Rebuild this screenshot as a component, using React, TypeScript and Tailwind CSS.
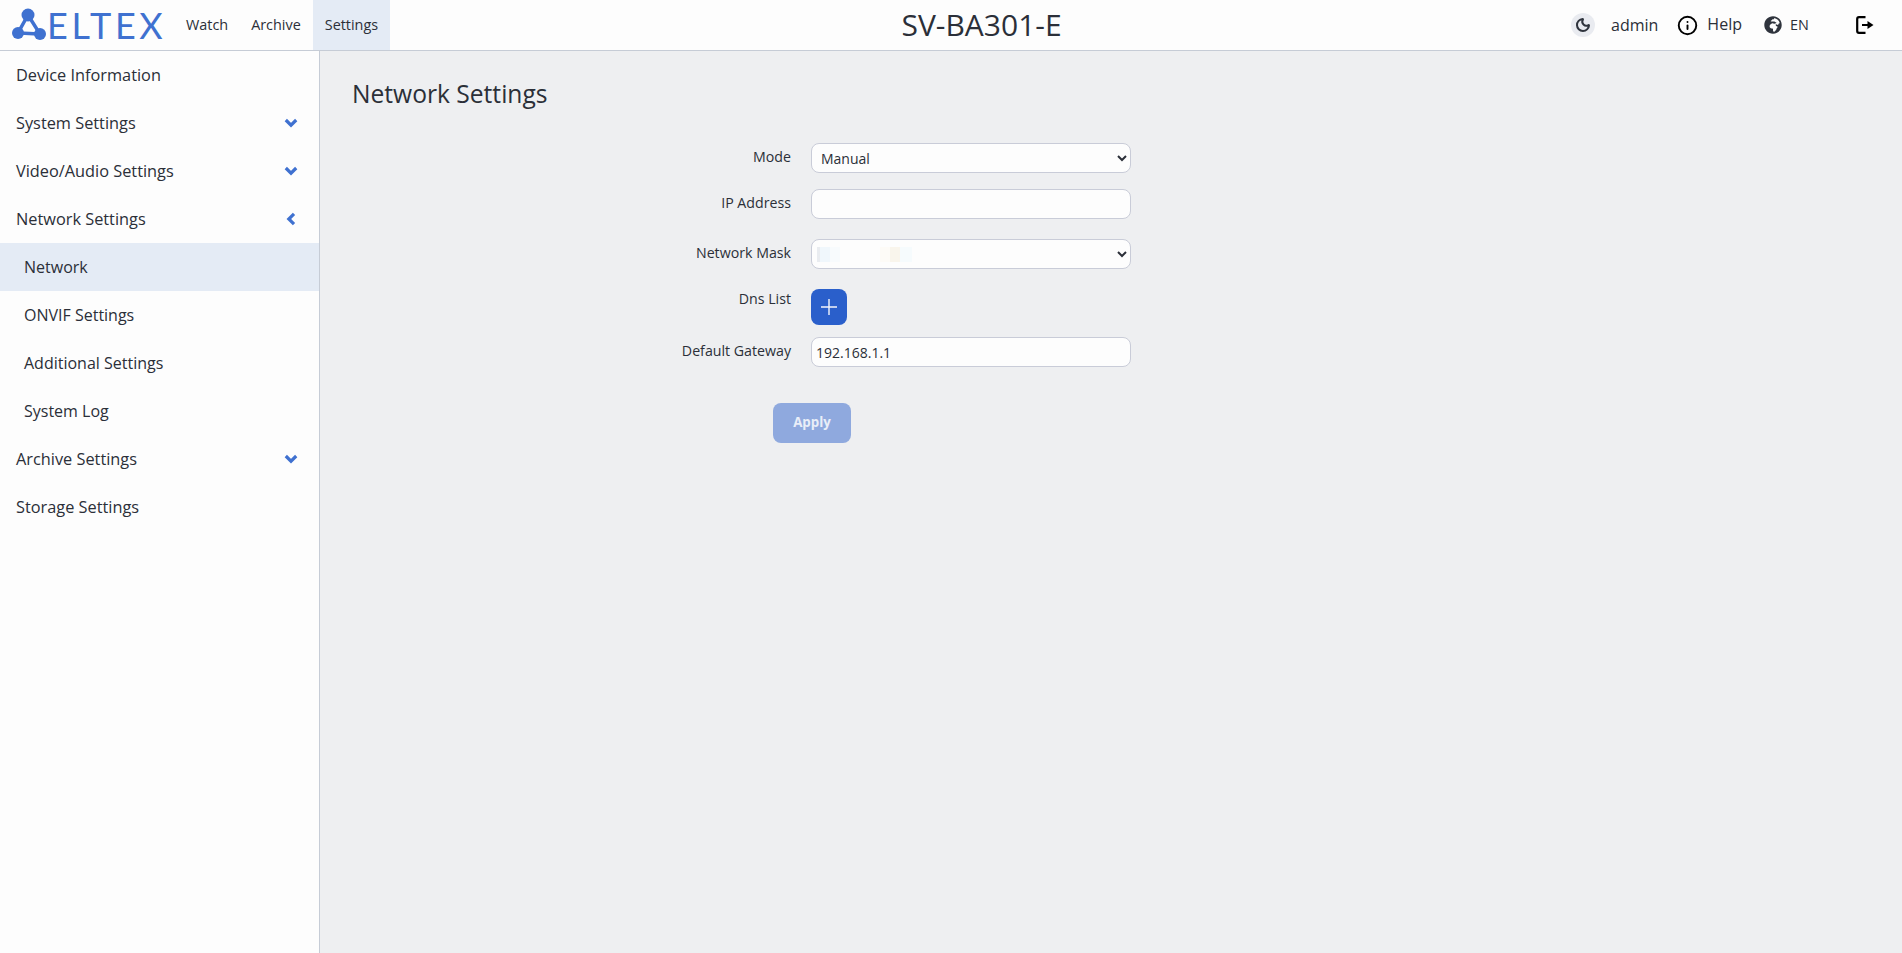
import { FaGlobeAfrica } from 'react-icons/fa';
import { Info, Moon } from 'lucide-react';

const FONT = "font-['Open_Sans',sans-serif]";

type NavItem = { label: string; icon?: 'down' | 'left'; sub?: boolean; active?: boolean };

const nav: NavItem[] = [
  { label: 'Device Information' },
  { label: 'System Settings', icon: 'down' },
  { label: 'Video/Audio Settings', icon: 'down' },
  { label: 'Network Settings', icon: 'left' },
  { label: 'Network', sub: true, active: true },
  { label: 'ONVIF Settings', sub: true },
  { label: 'Additional Settings', sub: true },
  { label: 'System Log', sub: true },
  { label: 'Archive Settings', icon: 'down' },
  { label: 'Storage Settings' },
];

function Logo() {
  return (
    <div className="flex items-center pl-[12px] w-[176px]">
      <svg width="36" height="34" viewBox="0 0 36 34" className="shrink-0">
        <path d="M16 7 L6 25 L28 26 Z" stroke="#3f71d0" strokeWidth="3.5" fill="none" />
        <g fill="#3f71d0">
          <circle cx="16" cy="7" r="6.5" />
          <circle cx="6" cy="25" r="6" />
          <circle cx="28" cy="26" r="6" />
        </g>
      </svg>
      <span className="ml-[-1px] text-[36px] leading-none font-['Lato',sans-serif] font-normal tracking-[3.6px] text-[#3f71d0]">
        ELTEX
      </span>
    </div>
  );
}

function Header() {
  return (
    <header className="relative h-[51px] shrink-0 flex items-stretch bg-[#fdfdfd] border-b border-[#c6ccd6] text-[#2b2f38]">
      <Logo />
      <nav className="flex items-stretch text-[14.4px]">
        <a className="flex items-center px-[10px]">Watch</a>
        <a className="flex items-center px-[12px] ml-[1px]">Archive</a>
        <a className="flex items-center px-[12px] bg-[#e4ebf5]">Settings</a>
      </nav>
      <div className="flex-1 flex items-center justify-center">
        <span className="text-[30px] leading-none ml-[33px]">SV-BA301-E</span>
      </div>
      <div className="flex items-center w-[362px] text-[16px]">
        <span className="flex items-center justify-center w-[24px] h-[24px] rounded-full bg-[#e9ebf0] ml-[31px]">
          <Moon size={16} color="#2f343d" strokeWidth={3} />
        </span>
        <span className="ml-[16px]">admin</span>
        <Info size={21} color="#000" strokeWidth={2.2} className="ml-[19px]" />
        <span className="ml-[9px] mt-[-3px]">Help</span>
        <FaGlobeAfrica size={18} color="#2f343d" className="ml-[22px]" />
        <span className="ml-[8px] text-[14.4px]">EN</span>
        <svg width="18" height="18" viewBox="0 0 18 18" fill="none" className="ml-[47px]">
          <path d="M9.5 1.2 H3 Q1.2 1.2 1.2 3 V15 Q1.2 16.8 3 16.8 H9.5" stroke="#000" strokeWidth="2.2" />
          <path d="M6 8 H11.5 V5 L17.5 9 L11.5 13 V10 H6 Z" fill="#000" />
        </svg>
      </div>
    </header>
  );
}

function ChevronDown() {
  return (
    <svg width="14" height="10" viewBox="0 0 14 10" fill="none">
      <path d="M1.8 2 L7 7.2 L12.2 2" stroke="#3f71d0" strokeWidth="3.2" />
    </svg>
  );
}

function ChevronLeft() {
  return (
    <svg width="10" height="14" viewBox="0 0 10 14" fill="none" className="mr-[2px]">
      <path d="M8 1.8 L2.8 7 L8 12.2" stroke="#3f71d0" strokeWidth="3.2" />
    </svg>
  );
}

function Sidebar() {
  return (
    <aside className="w-[320px] shrink-0 bg-[#fdfdfd] border-r border-[#c6ccd6] text-[#2b2f38]">
      {nav.map(item => (
        <div
          key={item.label}
          className={`h-[48px] flex items-center justify-between pr-[21px] ${item.sub ? 'pl-[24px] text-[16px]' : 'pl-[16px] text-[16.32px]'} ${item.active ? 'bg-[#e4ebf5]' : ''}`}
        >
          <span>{item.label}</span>
          {item.icon === 'down' && <ChevronDown />}
          {item.icon === 'left' && <ChevronLeft />}
        </div>
      ))}
    </aside>
  );
}

function Field({ label, className, labelClass, children }: { label: string; className?: string; labelClass?: string; children: React.ReactNode }) {
  return (
    <div className={`flex items-start ${className ?? ''}`}>
      <label className={`w-[459px] pr-[20px] text-right text-[14.2px] leading-[27px] text-[#2b2f38] ${labelClass ?? ''}`}>{label}</label>
      {children}
    </div>
  );
}

const inputCls =
  'w-[320px] h-[30px] rounded-[8px] border border-[#c9ccd8] bg-[#fdfdfd] text-[14px] text-[#2b2f38] outline-none';

export default function App() {
  return (
    <div className={`${FONT} h-[953px] flex flex-col bg-[#eeeff1] overflow-hidden`}>
      <Header />
      <div className="flex-1 flex min-h-0">
        <Sidebar />
        <main className="flex-1 pl-[32px] pt-[27px]">
          <h1 className="text-[24.6px] leading-[32px] text-[#2b2f38]">Network Settings</h1>
          <form className="mt-[33px]">
            <Field label="Mode">
              <select className={`${inputCls} pl-[5px]`} defaultValue="Manual">
                <option>Manual</option>
              </select>
            </Field>
            <Field label="IP Address" className="mt-[16px]">
              <input className={`${inputCls} px-[4px]`} />
            </Field>
            <Field label="Network Mask" className="mt-[20px]">
              <div className="relative">
                <select className={`${inputCls} pl-[5px]`}>
                  <option></option>
                </select>
                <div className="absolute left-[6px] top-[8px] h-[15px] flex pointer-events-none">
                  <span className="w-[3px] bg-[#e9ecf0]" />
                  <span className="w-[10px] bg-[#f0f7fc]" />
                  <span className="w-[10px] bg-[#f8fbfd]" />
                  <span className="w-[40px]" />
                  <span className="w-[10px] bg-[#fdfbf7]" />
                  <span className="w-[10px] bg-[#f9f5ec]" />
                  <span className="w-[12px] bg-[#f6fbfd]" />
                </div>
              </div>
            </Field>
            <Field label="Dns List" className="mt-[20px]" labelClass="mt-[-4px]">
              <button type="button" className="w-[36px] h-[36px] rounded-[8px] bg-[#2a5fcb] flex items-center justify-center">
                <svg width="16" height="16" viewBox="0 0 16 16" stroke="#f3f5fb" strokeWidth="1.4">
                  <path d="M8 0 V16 M0 8 H16" />
                </svg>
              </button>
            </Field>
            <Field label="Default Gateway" className="mt-[12px]">
              <input className={`${inputCls} px-[4px]`} defaultValue="192.168.1.1" />
            </Field>
            <div className="mt-[36px] ml-[421px]">
              <button type="button" className="w-[78px] h-[40px] rounded-[8px] bg-[#8fa9de] text-[13.33px] font-bold text-[#e9eef8]">
                Apply
              </button>
            </div>
          </form>
        </main>
      </div>
    </div>
  );
}
